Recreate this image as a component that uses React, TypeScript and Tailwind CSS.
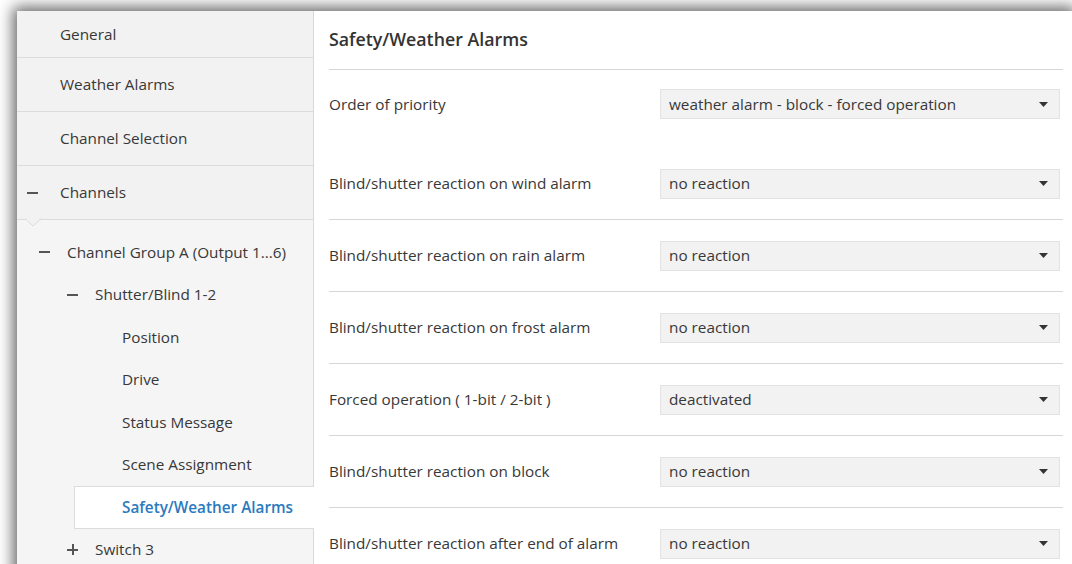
import React from 'react';

type TreeItem = {
  label: string;
  indent: number;
  toggle?: 'minus' | 'plus';
  active?: boolean;
};

const topItems = ['General', 'Weather Alarms', 'Channel Selection'];

const treeItems: TreeItem[] = [
  { label: 'Channel Group A (Output 1...6)', indent: 67, toggle: 'minus' },
  { label: 'Shutter/Blind 1-2', indent: 95, toggle: 'minus' },
  { label: 'Position', indent: 122 },
  { label: 'Drive', indent: 122 },
  { label: 'Status Message', indent: 122 },
  { label: 'Scene Assignment', indent: 122 },
  { label: 'Safety/Weather Alarms', indent: 122, active: true },
  { label: 'Switch 3', indent: 95, toggle: 'plus' },
];

const params = [
  { label: 'Blind/shutter reaction on wind alarm', value: 'no reaction' },
  { label: 'Blind/shutter reaction on rain alarm', value: 'no reaction' },
  { label: 'Blind/shutter reaction on frost alarm', value: 'no reaction' },
  { label: 'Forced operation ( 1-bit / 2-bit )', value: 'deactivated' },
  { label: 'Blind/shutter reaction on block', value: 'no reaction' },
  { label: 'Blind/shutter reaction after end of alarm', value: 'no reaction' },
];

const Toggle: React.FC<{ kind: 'minus' | 'plus' }> = ({ kind }) => (
  <span className="relative block w-[11px] h-[11px]">
    <span className="absolute left-0 top-[5px] w-[11px] h-[2px] bg-[#555]" />
    {kind === 'plus' && <span className="absolute left-[5px] top-0 w-[2px] h-[11px] bg-[#555]" />}
  </span>
);

const Select: React.FC<{ value: string }> = ({ value }) => (
  <div className="w-[400px] h-[30px] flex items-center justify-between pl-[8px] pr-[11px] bg-[#f2f2f2] border border-[#e3e3e3] text-[#383838]">
    <span>{value}</span>
    <svg width="9" height="5" viewBox="0 0 9 5">
      <path d="M0 0h9L4.5 5z" fill="#333" />
    </svg>
  </div>
);

const Sidebar: React.FC = () => (
  <aside className="w-[297px] shrink-0 h-full bg-[#f2f2f2] border-r border-[#d9d9d9] flex flex-col">
    {topItems.map((item, i) => (
      <div
        key={item}
        className={`${i === 0 ? 'h-[47px]' : 'h-[54px]'} shrink-0 flex items-center pl-[43px] border-b border-[#dcdcdc]`}
      >
        {item}
      </div>
    ))}
    <div className="relative h-[54px] shrink-0 flex items-center pl-[10px] border-b border-[#dcdcdc]">
      <Toggle kind="minus" />
      <span className="ml-[22px]">Channels</span>
      <svg className="absolute left-[8px] -bottom-[8px]" width="16" height="9" viewBox="0 0 16 9">
        <path d="M0 0.5L8 8L16 0.5" fill="#f2f2f2" stroke="#dcdcdc" />
      </svg>
    </div>
    <div className="flex-1 bg-[#f5f5f5] pt-[11px]">
      {treeItems.map((t) => (
        <div
          key={t.label}
          className={`relative h-[42.5px] flex items-center ${
            t.active
              ? 'ml-[57px] -mr-px bg-white border border-r-0 border-[#dcdcdc] text-[#2a7ac0] font-semibold'
              : ''
          }`}
          style={{ paddingLeft: t.active ? t.indent - 17 - 58 : t.indent - 17 }}
        >
          {t.toggle && (
            <span className="absolute top-[15px]" style={{ left: t.indent - 17 - 28 }}>
              <Toggle kind={t.toggle} />
            </span>
          )}
          {t.label}
        </div>
      ))}
    </div>
  </aside>
);

export default function App() {
  return (
    <div className="w-[1072px] h-[564px] overflow-hidden bg-white pl-[17px] pt-[11px]">
      <div
        className="w-[1055px] h-[600px] flex bg-white shadow-[0_0_14px_4px_rgba(0,0,0,0.6)] text-[15.3px] text-[#383838]"
        style={{ fontFamily: '"Open Sans", "Noto Sans", sans-serif' }}
      >
        <Sidebar />
        <main className="flex-1 bg-white pl-[15px] pr-[9px]">
          <div className="h-[59px] flex items-center border-b border-[#d6d6d6] pb-[2px]">
            <h1 className="text-[17.8px] font-semibold text-[#333]">Safety/Weather Alarms</h1>
          </div>
          <div className="h-[78px] flex items-start pt-[19px]">
            <div className="flex items-center w-full">
              <span className="w-[331px]">Order of priority</span>
              <Select value="weather alarm - block - forced operation" />
            </div>
          </div>
          {params.map((p) => (
            <div key={p.label} className="h-[72px] flex items-center border-b border-[#d6d6d6]">
              <span className="w-[331px]">{p.label}</span>
              <Select value={p.value} />
            </div>
          ))}
        </main>
      </div>
    </div>
  );
}
